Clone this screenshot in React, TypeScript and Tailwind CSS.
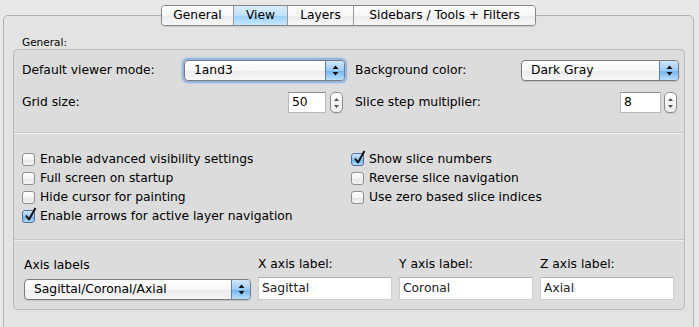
import React from "react";

const FONT = { fontFamily: '"DejaVu Sans", "Liberation Sans", sans-serif' };

function Arrows() {
  return (
    <svg width="7" height="11" viewBox="0 0 7 11">
      <path d="M3.5 0.5 L6.5 4 L0.5 4 Z" fill="#111" />
      <path d="M0.5 7 L6.5 7 L3.5 10.5 Z" fill="#111" />
    </svg>
  );
}

function Popup({ className, text, focus }: { className: string; text: string; focus?: boolean }) {
  return (
    <div
      className={
        "flex h-[21px] items-stretch rounded-[4px] border border-[#7c7c7c] bg-[linear-gradient(to_bottom,#ffffff,#f7f7f7_50%,#ececec_51%,#f6f6f6)] " +
        className +
        (focus ? " shadow-[0_0_0_2px_rgba(110,160,225,0.55),0_0_2px_3px_rgba(140,185,235,0.35)]" : " shadow-[0_1px_1px_rgba(0,0,0,0.12)]")
      }
    >
      <div className="flex flex-1 items-center pl-[9px] text-[12.3px] leading-none text-black">{text}</div>
      <div className="flex w-[19px] items-center justify-center rounded-r-[3px] border-l border-[#5d7fb3] bg-[linear-gradient(to_bottom,#cfe6fb,#9ccbf4_50%,#6fb3ef_51%,#b9defc)]">
        <Arrows />
      </div>
    </div>
  );
}

function Stepper() {
  return (
    <div className="flex h-[21px] w-[13px] flex-col items-center justify-center gap-[4px] rounded-[5px] border border-[#8c8c8c] bg-[linear-gradient(to_bottom,#ffffff,#ececec)] shadow-[0_1px_1px_rgba(0,0,0,0.1)]">
      <svg width="5" height="3" viewBox="0 0 5 3">
        <path d="M2.5 0 L5 3 L0 3 Z" fill="#555" />
      </svg>
      <svg width="5" height="3" viewBox="0 0 5 3">
        <path d="M0 0 L5 0 L2.5 3 Z" fill="#555" />
      </svg>
    </div>
  );
}

function NumField({ className, value }: { className: string; value: string }) {
  return (
    <div
      className={
        "flex h-[21px] items-center border border-[#b9b9b9] border-t-[#8f8f8f] bg-white pl-[3px] text-[12.3px] leading-none text-black " +
        className
      }
    >
      {value}
    </div>
  );
}

function TextField({ value }: { value: string }) {
  return (
    <div className="flex h-[23px] w-full items-center border border-[#cfcfcf] border-t-[#b3b3b3] bg-white pl-[3px] text-[12.3px] leading-none text-[#222]">
      {value}
    </div>
  );
}

function Checkbox({ checked, label }: { checked?: boolean; label: string }) {
  return (
    <div className="flex h-[19px] items-center gap-[5px]">
      <div
        className={
          "relative h-[13px] w-[13px] rounded-[3px] border " +
          (checked
            ? "border-[#4f6f9f] bg-[linear-gradient(to_bottom,#d0e7fb,#92c5f2_50%,#6aaeeb_51%,#b3dbfb)]"
            : "border-[#8e8e8e] bg-[linear-gradient(to_bottom,#ffffff,#f3f3f3_50%,#e6e6e6_51%,#f4f4f4)]")
        }
      >
        {checked && (
          <svg className="absolute left-[1px] top-[-4px]" width="13" height="15" viewBox="0 0 13 15">
            <path d="M2 8.5 L5 12.5 L11.5 1" stroke="#111" strokeWidth="2" fill="none" strokeLinejoin="round" />
          </svg>
        )}
      </div>
      <span className="text-[12.3px] leading-none text-black">{label}</span>
    </div>
  );
}

function Separator() {
  return <div className="h-[2px] w-full border-t border-b border-t-[#c6c6c6] border-b-[#eeeeee]" />;
}

export default function App() {
  const tabs = [
    { t: "General", w: "w-[71px]" },
    { t: "View", w: "w-[54px]", sel: true },
    { t: "Layers", w: "w-[66px]" },
    { t: "Sidebars / Tools + Filters", w: "w-[182px]" },
  ];
  return (
    <div className="h-[327px] w-[699px] overflow-hidden bg-[#e8e8e8]" style={FONT}>
      {/* tabs */}
      <div className="relative z-10 flex pl-[161px] pt-[5px]">
        <div className="flex h-[21px] overflow-hidden rounded-[4px] border border-[#858585] shadow-[0_1px_1px_rgba(0,0,0,0.12)]">
          {tabs.map((tab, i) => (
            <div
              key={tab.t}
              className={
                "flex items-center justify-center text-[12.3px] leading-none text-black " +
                tab.w +
                (i > 0 ? " border-l border-[#9a9a9a]" : "") +
                (tab.sel
                  ? " bg-[linear-gradient(to_bottom,#d9eefd,#bfe1fb_50%,#99d0f7_51%,#c4e8fd)]"
                  : " bg-[linear-gradient(to_bottom,#ffffff,#f6f6f6_50%,#ececec_51%,#f7f7f7)]")
              }
            >
              {tab.t}
            </div>
          ))}
        </div>
      </div>
      {/* tab body */}
      <div className="-mt-[11px] ml-[3px] h-[340px] w-[691px] rounded-[5px] border border-[#b3b3b3] bg-[#e3e3e3]">
        <div className="h-[13px] mt-[20px] pl-[18px] text-[10.5px] leading-[13px] text-black">General:</div>
        <div className="ml-[9px] h-[261px] w-[672px] rounded-[4px] border border-[#bcbcbc] bg-[#dcdcdc]">
          {/* row 1 */}
          <div className="mt-[10px] flex h-[21px] pl-[8px]">
            <div className="flex w-[323px] items-center">
              <div className="flex-1 text-[12.3px] leading-none text-black">Default viewer mode:</div>
              <Popup className="w-[161px]" text="1and3" focus />
            </div>
            <div className="ml-[10px] flex w-[324px] items-center">
              <div className="flex-1 text-[12.3px] leading-none text-black">Background color:</div>
              <Popup className="w-[158px]" text="Dark Gray" />
            </div>
          </div>
          {/* row 2 */}
          <div className="mt-[11px] flex h-[21px] pl-[8px]">
            <div className="flex w-[323px] items-center">
              <div className="flex-1 text-[12.3px] leading-none text-black">Grid size:</div>
              <NumField className="w-[38px]" value="50" />
              <div className="ml-[4px] mr-[2px]">
                <Stepper />
              </div>
            </div>
            <div className="ml-[10px] flex w-[324px] items-center">
              <div className="flex-1 text-[12.3px] leading-none text-black">Slice step multiplier:</div>
              <NumField className="w-[41px]" value="8" />
              <div className="ml-[3px] mr-[2px]">
                <Stepper />
              </div>
            </div>
          </div>
          <div className="mt-[19px]">
            <Separator />
          </div>
          {/* checkboxes */}
          <div className="mt-[16px] flex pl-[8px]">
            <div className="flex w-[329px] flex-col">
              <Checkbox label="Enable advanced visibility settings" />
              <Checkbox label="Full screen on startup" />
              <Checkbox label="Hide cursor for painting" />
              <Checkbox label="Enable arrows for active layer navigation" checked />
            </div>
            <div className="flex flex-col">
              <Checkbox label="Show slice numbers" checked />
              <Checkbox label="Reverse slice navigation" />
              <Checkbox label="Use zero based slice indices" />
            </div>
          </div>
          <div className="mt-[13px]">
            <Separator />
          </div>
          {/* axis labels */}
          <div className="mt-[15px] flex items-end gap-[7px] pl-[10px]">
            <div className="flex w-[227px] flex-col gap-[6px]">
              <div className="h-[16px] text-[12.3px] leading-[16px] text-black">Axis labels</div>
              <Popup className="w-full" text="Sagittal/Coronal/Axial" />
            </div>
            <div className="flex w-[134px] flex-col gap-[5px]">
              <div className="h-[16px] text-[12.3px] leading-[16px] text-black">X axis label:</div>
              <TextField value="Sagittal" />
            </div>
            <div className="flex w-[134px] flex-col gap-[5px]">
              <div className="h-[16px] text-[12.3px] leading-[16px] text-black">Y axis label:</div>
              <TextField value="Coronal" />
            </div>
            <div className="flex w-[134px] flex-col gap-[5px]">
              <div className="h-[16px] text-[12.3px] leading-[16px] text-black">Z axis label:</div>
              <TextField value="Axial" />
            </div>
          </div>
        </div>
      </div>
    </div>
  );
}
